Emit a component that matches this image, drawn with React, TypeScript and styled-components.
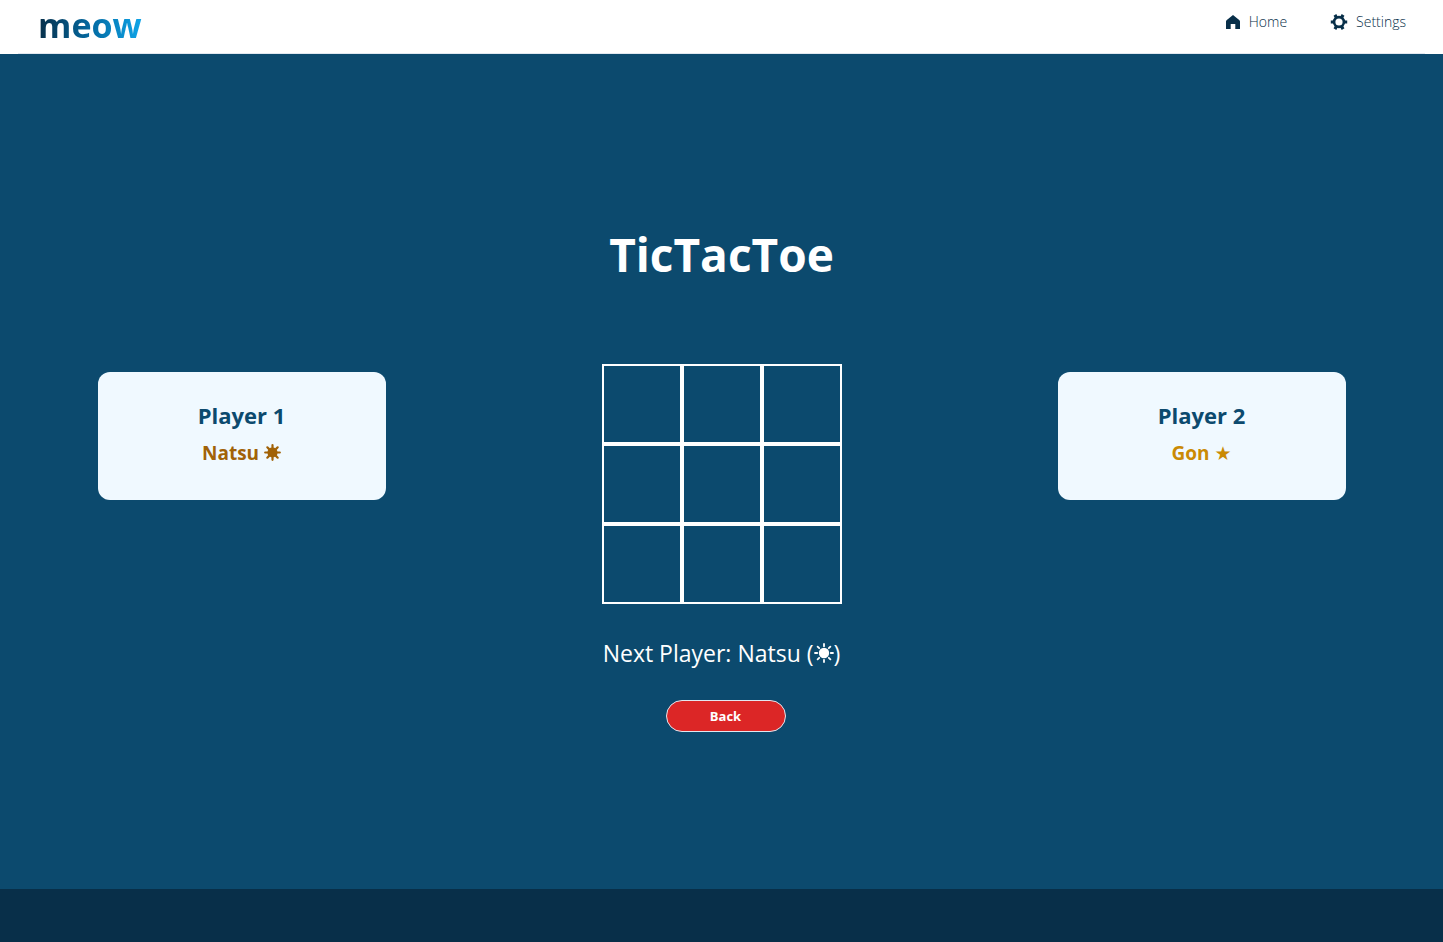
import React, { useState } from "react";
import styled, { createGlobalStyle } from "styled-components";

const GlobalStyle = createGlobalStyle`
  * { box-sizing: border-box; }
  body {
    margin: 0;
    background: #082f49;
    font-family: "Segoe UI", "Open Sans", "Noto Sans", "DejaVu Sans", sans-serif;
  }
  h1, h2, p { margin: 0; }
`;

const Page = styled.div`
  min-height: 100vh;
  display: flex;
  flex-direction: column;
`;

const Header = styled.header`
  background: #ffffff;
  padding: 0 18px;
`;

const Nav = styled.nav`
  height: 54px;
  padding: 0 19px 0 20px;
  display: flex;
  justify-content: space-between;
  align-items: flex-start;
  border-bottom: 1px solid #e2e8f0;
`;

const Brand = styled.a`
  font-size: 34px;
  line-height: 50px;
  font-weight: 700;
  text-decoration: none;
  color: transparent;
  background: linear-gradient(to right, #082f49, #0369a1 50%, #0ea5e9);
  background-clip: text;
  -webkit-background-clip: text;
`;

const Links = styled.div`
  display: flex;
  gap: 43px;
  padding-top: 12px;
`;

const NavLink = styled.a`
  display: flex;
  align-items: center;
  gap: 8px;
  font-size: 14px;
  line-height: 20px;
  font-weight: 300;
  color: #082f49;
  text-decoration: none;
`;

const Main = styled.main`
  flex: 1;
  background: #0c4a6e;
  padding: 164px 0 156px;
`;

const Title = styled.h1`
  color: #ffffff;
  font-size: 46px;
  line-height: 72px;
  font-weight: 700;
  text-align: center;
`;

const Columns = styled.div`
  max-width: 1440px;
  margin: 74px auto 0;
  display: grid;
  grid-template-columns: repeat(3, 1fr);
  justify-items: center;
  align-items: start;
`;

const Card = styled.section`
  width: 288px;
  height: 128px;
  margin-top: 8px;
  padding: 28px 16px;
  border-radius: 12px;
  background: #f0f9ff;
  text-align: center;
`;

const CardTitle = styled.h2`
  color: #0c4a6e;
  font-size: 22px;
  line-height: 30px;
  font-weight: 700;
`;

const PlayerName = styled.p<{ $tone: string }>`
  color: ${(p) => p.$tone};
  margin-top: 8px;
  font-size: 19px;
  line-height: 30px;
  font-weight: 700;
`;

const Game = styled.section`
  display: flex;
  flex-direction: column;
  align-items: center;
`;

const Board = styled.div`
  display: grid;
  grid-template-columns: repeat(3, 80px);
  grid-auto-rows: 80px;
`;

const Cell = styled.button`
  border: 2px solid #ffffff;
  background: transparent;
  color: #ffffff;
  padding: 0;
  font: inherit;
  font-size: 36px;
  cursor: pointer;
`;

const Status = styled.p`
  margin-top: 32px;
  color: #ffffff;
  font-size: 23px;
  line-height: 34px;
`;

const BackButton = styled.button`
  width: 120px;
  height: 32px;
  margin: 30px 0 0 8px;
  border: 1px solid #e2e8f0;
  border-radius: 16px;
  background: #dc2626;
  color: #ffffff;
  font: inherit;
  font-size: 13px;
  font-weight: 700;
  cursor: pointer;
`;

const Footer = styled.footer`
  height: 53px;
  background: #082f49;
`;

const SunSvg = styled.svg<{ $size: number }>`
  width: ${(p) => p.$size}px;
  height: ${(p) => p.$size}px;
  vertical-align: -1px;
`;

const HomeIcon = () => (
  <svg width="16" height="16" viewBox="0 0 16 16" fill="#082f49" aria-hidden="true">
    <path d="M8 1 L14.2 5.9 Q15 6.5 15 7.5 V15 H10.3 V10 H5.7 V15 H1 V7.5 Q1 6.5 1.8 5.9 Z" />
  </svg>
);

const GearIcon = () => (
  <svg width="18" height="16" viewBox="0 0 18 16" fill="none" stroke="#082f49" aria-hidden="true">
    <circle cx="9" cy="8" r="4.9" strokeWidth="2.6" />
    <path d="M0.8 8H4M14 8H17.2M4.9 0.9L6.6 3.8M13.1 0.9L11.4 3.8M4.9 15.1L6.6 12.2M13.1 15.1L11.4 12.2" strokeWidth="3.2" />
  </svg>
);

const Sun = ({ bold }: { bold?: boolean }) => (
  <SunSvg $size={bold ? 17 : 20} viewBox="0 0 20 20" role="img" aria-label="☀">
    <circle cx="10" cy="10" r={bold ? 6 : 5.2} fill="currentColor" />
    <path
      d={
        bold
          ? "M10 1.4V5M10 15V18.6M1.4 10H5M15 10H18.6M3.9 3.9L6 6M14 14L16.1 16.1M3.9 16.1L6 14M14 6L16.1 3.9"
          : "M10 1V3.2M10 16.8V19M1 10H3.2M16.8 10H19M3.6 3.6L5.2 5.2M14.8 14.8L16.4 16.4M3.6 16.4L5.2 14.8M14.8 5.2L16.4 3.6"
      }
      fill="none"
      stroke="currentColor"
      strokeWidth={bold ? 2.6 : 1.8}
      strokeLinecap="round"
    />
  </SunSvg>
);

const Mark = ({ mark, bold }: { mark: string; bold?: boolean }) =>
  mark === "sun" ? <Sun bold={bold} /> : <>{mark}</>;

const players = [
  { label: "Player 1", name: "Natsu", mark: "sun", tone: "#a16207" },
  { label: "Player 2", name: "Gon", mark: "★", tone: "#ca8a04" },
];

const PlayerCard = ({ player }: { player: (typeof players)[number] }) => (
  <Card>
    <CardTitle>{player.label}</CardTitle>
    <PlayerName $tone={player.tone}>
      {player.name} <Mark mark={player.mark} bold />
    </PlayerName>
  </Card>
);

export default function App() {
  const [cells, setCells] = useState<string[]>(Array(9).fill(""));
  const next = players[cells.filter(Boolean).length % 2];
  const play = (index: number) =>
    setCells(cells.map((c, i) => (i === index && !c ? next.mark : c)));

  return (
    <>
      <GlobalStyle />
      <Page>
        <Header>
          <Nav>
            <Brand href="#">meow</Brand>
            <Links>
              <NavLink href="#home"><HomeIcon />Home</NavLink>
              <NavLink href="#settings"><GearIcon />Settings</NavLink>
            </Links>
          </Nav>
        </Header>
        <Main>
          <Title>TicTacToe</Title>
          <Columns>
            <PlayerCard player={players[0]} />
            <Game>
              <Board>
                {cells.map((c, i) => (
                  <Cell key={i} aria-label={`Square ${i + 1}`} onClick={() => play(i)}><Mark mark={c} /></Cell>
                ))}
              </Board>
              <Status>Next Player: {next.name} (<Mark mark={next.mark} />)</Status>
              <BackButton type="button">Back</BackButton>
            </Game>
            <PlayerCard player={players[1]} />
          </Columns>
        </Main>
        <Footer />
      </Page>
    </>
  );
}
